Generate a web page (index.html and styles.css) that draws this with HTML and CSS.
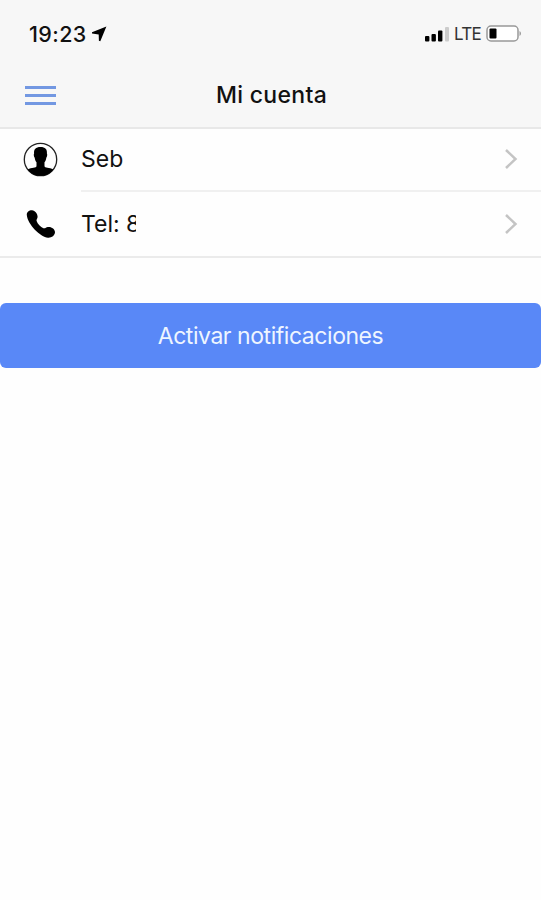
FILE: index.html
```html
<!DOCTYPE html>
<html lang="es">
<head>
    <meta charset="UTF-8">
    <meta name="viewport" content="width=device-width, initial-scale=1.0">
    <title>Mi cuenta</title>
    <link rel="stylesheet" href="styles.css">
</head>
<body>
    <header>
        <div class="status-bar">
            <span class="time">19:23</span>
            <svg class="location" width="16" height="16" viewBox="0 0 16 16">
                <path d="M15.400 .5 9.300 15.200 7.900 14.800 7.700 8.400 1 7.600V6.300Z"/>
            </svg>
            <svg class="signal" width="26" height="16" viewBox="0 0 26 16">
                <rect x="1" y="10" width="4.400" height="5.500" rx="1"/>
                <rect x="7.500" y="8" width="4.400" height="7.500" rx="1"/>
                <rect x="14" y="4.500" width="4.400" height="11" rx="1"/>
                <rect class="off" x="21" y="1" width="4" height="14.500" rx="1"/>
            </svg>
            <span class="network">LTE</span>
            <svg class="battery" width="36" height="18" viewBox="0 0 36 18">
                <rect class="case" x="1" y="1" width="31" height="15" rx="4"/>
                <rect x="3.500" y="3.500" width="7" height="10" rx="1"/>
                <path class="cap" d="M33.500 6c2 1 2 4 0 5Z"/>
            </svg>
        </div>
        <div class="nav-bar">
            <button class="menu" aria-label="Menú">
                <span></span>
                <span></span>
                <span></span>
            </button>
            <h1>Mi cuenta</h1>
        </div>
    </header>
    <main>
        <ul class="account-list">
            <li class="account-item">
                <svg class="icon" width="36" height="36" viewBox="0 0 36 36">
                    <circle class="ring" cx="18.500" cy="18.500" r="16.200"/>
                    <path d="M18.500 6c4.800 0 6.800 2.300 6.400 6.600.6.700.3 3.500-.6 4.100-.3 2-.9 3.500-1.800 4.600V25c0 2.400 5.200 1.400 8.700 3.400C28.500 32.500 24 34.700 18.500 34.700S8.500 32.500 5.800 28.400c3.500-2 8.700-1 8.700-3.400V21.300c-.9-1.100-1.500-2.600-1.800-4.600-.9-.6-1.200-3.400-.6-4.100-.4-4.300 1.600-6.600 6.400-6.600Z"/>
                </svg>
                <div class="item-body">
                    <span class="label">Seb</span>
                    <svg class="chevron" width="14" height="22" viewBox="0 0 14 22">
                        <path d="M2 2 11.500 11 2 20"/>
                    </svg>
                </div>
            </li>
            <li class="account-item">
                <svg class="icon" width="36" height="36" viewBox="0 0 36 36">
                    <path d="M4.800 9C4.500 6 7.500 4 10 4.200c3.200.3 5.600 3.600 5.600 6.500 0 2-1.500 2.600-1 4.300 1 3.200 4 6 6.800 7.200 1.600.6 2.600-.8 4.400-1.200 3.400-.7 7.200 2 7.200 5 0 3.600-3.600 6-7 5.700C18.500 31 5.600 18.500 4.800 9Z"/>
                </svg>
                <div class="item-body">
                    <span class="label phone">Tel: 8</span>
                    <svg class="chevron" width="14" height="22" viewBox="0 0 14 22">
                        <path d="M2 2 11.500 11 2 20"/>
                    </svg>
                </div>
            </li>
        </ul>
        <button class="btn-notify">Activar notificaciones</button>
    </main>
</body>
</html>
```
FILE: styles.css
```css
* {
    box-sizing: border-box;
}
body {
    font-family: Inter, "Liberation Sans", sans-serif;
    margin: 0;
    padding: 0;
    background-color: #fefefe;
    color: #111;
}
header {
    height: 129px;
    background-color: #f7f7f7;
    border-bottom: 2px solid #e8e8e8;
}
.status-bar {
    display: flex;
    align-items: center;
    height: 67px;
    padding: 0 19px 0 29px;
}
.time {
    font-size: 21.5px;
    font-weight: 500;
    letter-spacing: 0.4px;
}
.location {
    margin-left: 4px;
}
.signal {
    margin-left: auto;
}
.signal .off {
    fill: #ccc;
}
.network {
    margin: 1px 5px 0 4px;
    font-size: 17px;
    letter-spacing: -0.7px;
    color: #333;
}
.battery .case {
    fill: #fff;
    stroke: #999;
    stroke-width: 1.5px;
}
.battery .cap {
    fill: #999;
}
.nav-bar {
    display: grid;
    grid-template-columns: 80px 1fr 80px;
    align-items: center;
    height: 57px;
}
.menu {
    display: flex;
    flex-direction: column;
    gap: 5px;
    width: 31px;
    margin-left: 25px;
    padding: 0;
    border: none;
    background: none;
}
.menu span {
    width: 31px;
    height: 3px;
    background-color: #7398e2;
}
h1 {
    margin: 0 0 1px 2px;
    font-size: 23px;
    font-weight: 500;
    letter-spacing: 0.3px;
    text-align: center;
}
.account-list {
    margin: 0;
    padding: 0;
    list-style: none;
    border-bottom: 2px solid #ebebeb;
}
.account-item {
    display: flex;
    align-items: center;
    height: 63px;
    padding-left: 22px;
}
.account-item:first-child {
    padding-bottom: 0;
}
.account-item:last-child {
    height: 64px;
}
.icon {
    flex: none;
    margin: 0 23px 0 0;
}
.account-item:first-child .icon {
    margin-bottom: 4px;
}
.icon .ring {
    fill: none;
    stroke: #222;
    stroke-width: 1.3px;
}
.item-body {
    display: flex;
    flex: 1;
    align-items: center;
    justify-content: space-between;
    height: 100%;
    padding-right: 23px;
    border-bottom: 2px solid #f0f0f0;
}
.account-item:first-child .item-body {
    padding-bottom: 1px;
}
.account-item:last-child .item-body {
    border-bottom: none;
}
.label {
    font-size: 23px;
}
.phone {
    width: 55px;
    overflow: hidden;
    white-space: nowrap;
}
.chevron path {
    fill: none;
    stroke: #c4c4c4;
    stroke-width: 2.5px;
}
.btn-notify {
    display: block;
    width: 100%;
    height: 65px;
    margin-top: 45px;
    padding: 0;
    border: none;
    border-radius: 6px;
    background-color: #5988f7;
    color: #eef5ff;
    font-family: inherit;
    font-size: 23px;
    letter-spacing: -0.45px;
}
```
